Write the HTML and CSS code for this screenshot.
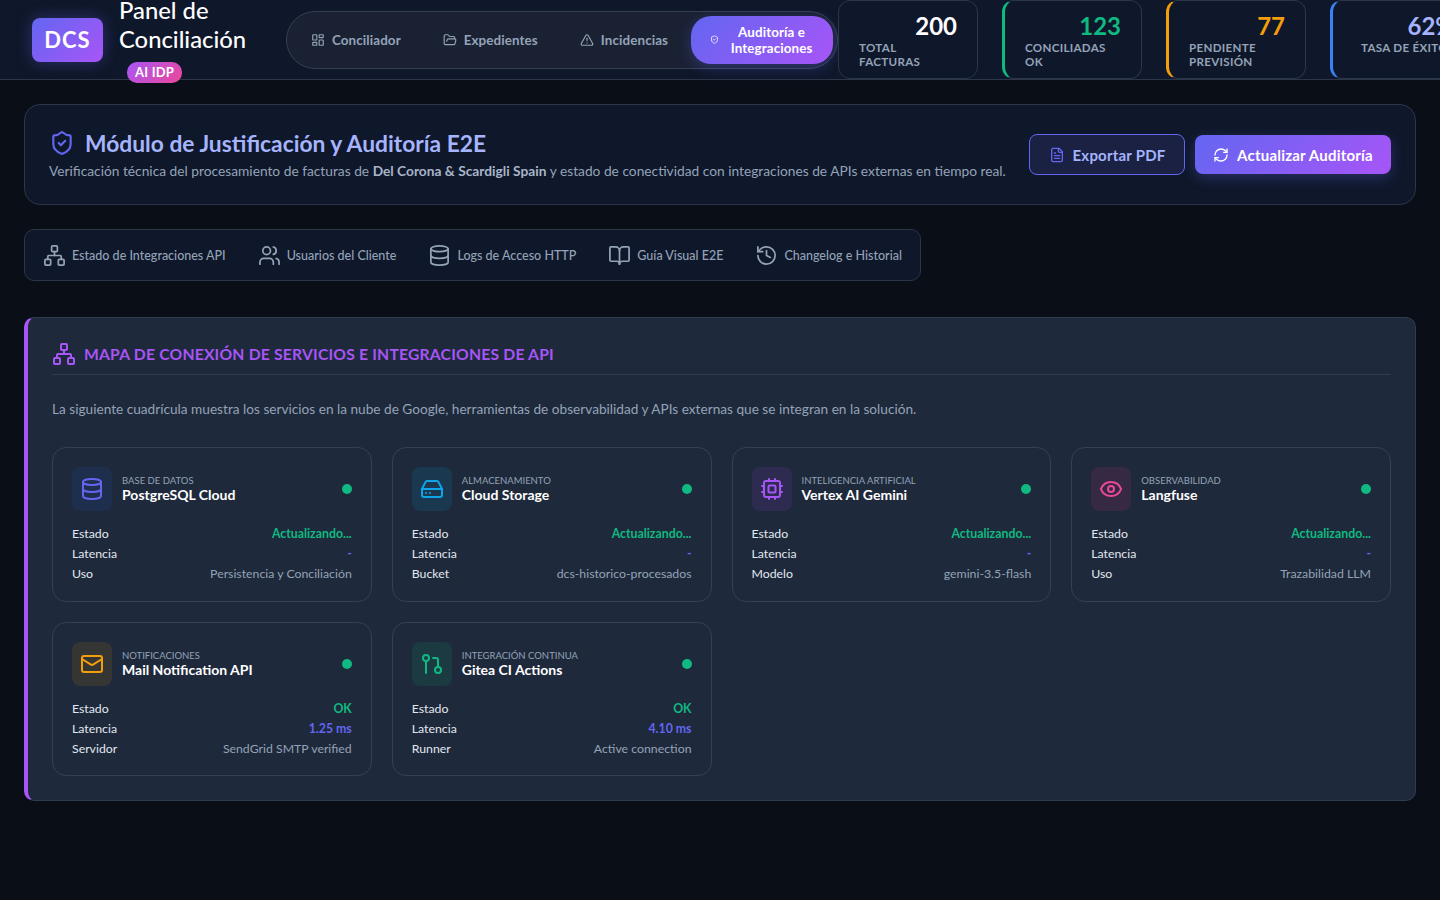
FILE: index.html
```html
<!DOCTYPE html>
<html lang="es">
<head>
  <meta charset="UTF-8">
  <meta name="viewport" content="width=device-width, initial-scale=1.0">
  <title>Panel de Conciliación - Auditoría</title>
  <link rel="stylesheet" href="styles.css">
</head>
<body>
  <header class="topbar">
    <div class="brand">
      <div class="logo">DCS</div>
      <div class="brand-text">
        <h1 class="brand-title">Panel de Conciliación</h1>
        <span class="brand-badge">AI IDP</span>
      </div>
    </div>

    <nav class="main-nav">
      <a class="nav-item" href="#">
        <svg class="icon nav-icon" viewBox="0 0 24 24"><rect x="3" y="3" width="7" height="9" rx="1"/><rect x="14" y="3" width="7" height="5" rx="1"/><rect x="14" y="12" width="7" height="9" rx="1"/><rect x="3" y="16" width="7" height="5" rx="1"/></svg>
        Conciliador
      </a>
      <a class="nav-item" href="#">
        <svg class="icon nav-icon" viewBox="0 0 24 24"><path d="m6 14 1.5-2.9A2 2 0 0 1 9.24 10H20a2 2 0 0 1 1.94 2.5l-1.54 6a2 2 0 0 1-1.95 1.5H4a2 2 0 0 1-2-2V5a2 2 0 0 1 2-2h3.9a2 2 0 0 1 1.69.9l.81 1.2a2 2 0 0 0 1.67.9H18a2 2 0 0 1 2 2v2"/></svg>
        Expedientes
      </a>
      <a class="nav-item" href="#">
        <svg class="icon nav-icon" viewBox="0 0 24 24"><path d="m21.73 18-8-14a2 2 0 0 0-3.48 0l-8 14A2 2 0 0 0 4 21h16a2 2 0 0 0 1.73-3"/><path d="M12 9v4"/><path d="M12 17h.01"/></svg>
        Incidencias
      </a>
      <a class="nav-item nav-active" href="#">
        <svg class="icon nav-icon-small" viewBox="0 0 24 24"><path d="M20 13c0 5-3.5 7.5-7.66 8.95a1 1 0 0 1-.67-.01C7.5 20.5 4 18 4 13V6a1 1 0 0 1 1-1c2 0 4.5-1.2 6.24-2.72a1.17 1.17 0 0 1 1.52 0C14.51 3.81 17 5 19 5a1 1 0 0 1 1 1z"/><path d="m9 12 2 2 4-4"/></svg>
        <span>Auditoría e Integraciones</span>
      </a>
    </nav>

    <div class="stats">
      <div class="stat-card">
        <div class="stat-value">200</div>
        <div class="stat-label">Total Facturas</div>
      </div>
      <div class="stat-card stat-green">
        <div class="stat-value">123</div>
        <div class="stat-label">Conciliadas OK</div>
      </div>
      <div class="stat-card stat-orange">
        <div class="stat-value">77</div>
        <div class="stat-label">Pendiente Previsión</div>
      </div>
      <div class="stat-card stat-blue">
        <div class="stat-value">62%</div>
        <div class="stat-label">Tasa de Éxito</div>
      </div>
    </div>
  </header>

  <main class="content">
    <section class="hero">
      <div class="hero-text">
        <h2 class="hero-title">
          <svg class="icon hero-icon" viewBox="0 0 24 24"><path d="M20 13c0 5-3.5 7.5-7.66 8.95a1 1 0 0 1-.67-.01C7.5 20.5 4 18 4 13V6a1 1 0 0 1 1-1c2 0 4.5-1.2 6.24-2.72a1.17 1.17 0 0 1 1.52 0C14.51 3.81 17 5 19 5a1 1 0 0 1 1 1z"/><path d="m9 12 2 2 4-4"/></svg>
          Módulo de Justificación y Auditoría E2E
        </h2>
        <p class="hero-desc">Verificación técnica del procesamiento de facturas de <strong>Del Corona &amp; Scardigli Spain</strong> y estado de conectividad con integraciones de APIs externas en tiempo real.</p>
      </div>
      <div class="hero-actions">
        <button class="btn btn-outline">
          <svg class="icon btn-icon" viewBox="0 0 24 24"><path d="M15 2H6a2 2 0 0 0-2 2v16a2 2 0 0 0 2 2h12a2 2 0 0 0 2-2V7Z"/><path d="M14 2v4a2 2 0 0 0 2 2h4"/><path d="M10 9H8"/><path d="M16 13H8"/><path d="M16 17H8"/></svg>
          Exportar PDF
        </button>
        <button class="btn btn-primary">
          <svg class="icon btn-icon" viewBox="0 0 24 24"><path d="M3 12a9 9 0 0 1 9-9 9.75 9.75 0 0 1 6.74 2.74L21 8"/><path d="M21 3v5h-5"/><path d="M21 12a9 9 0 0 1-9 9 9.75 9.75 0 0 1-6.74-2.74L3 16"/><path d="M8 16H3v5"/></svg>
          Actualizar Auditoría
        </button>
      </div>
    </section>

    <div class="tabs">
      <a class="tab" href="#">
        <svg class="icon tab-icon" viewBox="0 0 24 24"><rect x="16" y="16" width="6" height="6" rx="1"/><rect x="2" y="16" width="6" height="6" rx="1"/><rect x="9" y="2" width="6" height="6" rx="1"/><path d="M5 16v-3a1 1 0 0 1 1-1h12a1 1 0 0 1 1 1v3"/><path d="M12 12V8"/></svg>
        Estado de Integraciones API
      </a>
      <a class="tab" href="#">
        <svg class="icon tab-icon" viewBox="0 0 24 24"><path d="M16 21v-2a4 4 0 0 0-4-4H6a4 4 0 0 0-4 4v2"/><circle cx="9" cy="7" r="4"/><path d="M22 21v-2a4 4 0 0 0-3-3.87"/><path d="M16 3.13a4 4 0 0 1 0 7.75"/></svg>
        Usuarios del Cliente
      </a>
      <a class="tab" href="#">
        <svg class="icon tab-icon" viewBox="0 0 24 24"><ellipse cx="12" cy="5" rx="9" ry="3"/><path d="M3 5v14a9 3 0 0 0 18 0V5"/><path d="M3 12a9 3 0 0 0 18 0"/></svg>
        Logs de Acceso HTTP
      </a>
      <a class="tab" href="#">
        <svg class="icon tab-icon" viewBox="0 0 24 24"><path d="M12 7v14"/><path d="M3 18a1 1 0 0 1-1-1V4a1 1 0 0 1 1-1h5a4 4 0 0 1 4 4 4 4 0 0 1 4-4h5a1 1 0 0 1 1 1v13a1 1 0 0 1-1 1h-6a3 3 0 0 0-3 3 3 3 0 0 0-3-3z"/></svg>
        Guía Visual E2E
      </a>
      <a class="tab" href="#">
        <svg class="icon tab-icon" viewBox="0 0 24 24"><path d="M3 12a9 9 0 1 0 9-9 9.75 9.75 0 0 0-6.74 2.74L3 8"/><path d="M3 3v5h5"/><path d="M12 7v5l4 2"/></svg>
        Changelog e Historial
      </a>
    </div>

    <section class="panel">
      <h3 class="panel-title">
        <svg class="icon panel-icon" viewBox="0 0 24 24"><rect x="16" y="16" width="6" height="6" rx="1"/><rect x="2" y="16" width="6" height="6" rx="1"/><rect x="9" y="2" width="6" height="6" rx="1"/><path d="M5 16v-3a1 1 0 0 1 1-1h12a1 1 0 0 1 1 1v3"/><path d="M12 12V8"/></svg>
        Mapa de Conexión de Servicios e Integraciones de API
      </h3>
      <p class="panel-desc">La siguiente cuadrícula muestra los servicios en la nube de Google, herramientas de observabilidad y APIs externas que se integran en la solución.</p>

      <div class="service-grid">
        <article class="service-card">
          <div class="service-head">
            <div class="service-icon tint-indigo">
              <svg class="icon" viewBox="0 0 24 24"><ellipse cx="12" cy="5" rx="9" ry="3"/><path d="M3 5v14a9 3 0 0 0 18 0V5"/><path d="M3 12a9 3 0 0 0 18 0"/></svg>
            </div>
            <div class="service-name">
              <span class="service-type">Base de datos</span>
              <strong>PostgreSQL Cloud</strong>
            </div>
            <span class="status-dot"></span>
          </div>
          <div class="service-row"><span>Estado</span><span class="val-ok">Actualizando...</span></div>
          <div class="service-row"><span>Latencia</span><span class="val-lat">-</span></div>
          <div class="service-row"><span>Uso</span><span class="val-muted">Persistencia y Conciliación</span></div>
        </article>

        <article class="service-card">
          <div class="service-head">
            <div class="service-icon tint-sky">
              <svg class="icon" viewBox="0 0 24 24"><path d="M22 12H2"/><path d="M5.45 5.11 2 12v6a2 2 0 0 0 2 2h16a2 2 0 0 0 2-2v-6l-3.45-6.89A2 2 0 0 0 16.76 4H7.24a2 2 0 0 0-1.79 1.11z"/><path d="M6 16h.01"/><path d="M10 16h.01"/></svg>
            </div>
            <div class="service-name">
              <span class="service-type">Almacenamiento</span>
              <strong>Cloud Storage</strong>
            </div>
            <span class="status-dot"></span>
          </div>
          <div class="service-row"><span>Estado</span><span class="val-ok">Actualizando...</span></div>
          <div class="service-row"><span>Latencia</span><span class="val-lat">-</span></div>
          <div class="service-row"><span>Bucket</span><span class="val-muted">dcs-historico-procesados</span></div>
        </article>

        <article class="service-card">
          <div class="service-head">
            <div class="service-icon tint-purple">
              <svg class="icon" viewBox="0 0 24 24"><rect x="4" y="4" width="16" height="16" rx="2"/><rect x="8.5" y="8.5" width="7" height="7" rx="1"/><path d="M15 2v2"/><path d="M15 20v2"/><path d="M2 15h2"/><path d="M2 9h2"/><path d="M20 15h2"/><path d="M20 9h2"/><path d="M9 2v2"/><path d="M9 20v2"/></svg>
            </div>
            <div class="service-name">
              <span class="service-type">Inteligencia artificial</span>
              <strong>Vertex AI Gemini</strong>
            </div>
            <span class="status-dot"></span>
          </div>
          <div class="service-row"><span>Estado</span><span class="val-ok">Actualizando...</span></div>
          <div class="service-row"><span>Latencia</span><span class="val-lat">-</span></div>
          <div class="service-row"><span>Modelo</span><span class="val-muted">gemini-3.5-flash</span></div>
        </article>

        <article class="service-card">
          <div class="service-head">
            <div class="service-icon tint-pink">
              <svg class="icon" viewBox="0 0 24 24"><path d="M2.06 12.35a1 1 0 0 1 0-.7 10.75 10.75 0 0 1 19.88 0 1 1 0 0 1 0 .7 10.75 10.75 0 0 1-19.88 0"/><circle cx="12" cy="12" r="3"/></svg>
            </div>
            <div class="service-name">
              <span class="service-type">Observabilidad</span>
              <strong>Langfuse</strong>
            </div>
            <span class="status-dot"></span>
          </div>
          <div class="service-row"><span>Estado</span><span class="val-ok">Actualizando...</span></div>
          <div class="service-row"><span>Latencia</span><span class="val-lat">-</span></div>
          <div class="service-row"><span>Uso</span><span class="val-muted">Trazabilidad LLM</span></div>
        </article>

        <article class="service-card">
          <div class="service-head">
            <div class="service-icon tint-amber">
              <svg class="icon" viewBox="0 0 24 24"><rect x="2" y="4" width="20" height="16" rx="2"/><path d="m22 7-8.97 5.7a1.94 1.94 0 0 1-2.06 0L2 7"/></svg>
            </div>
            <div class="service-name">
              <span class="service-type">Notificaciones</span>
              <strong>Mail Notification API</strong>
            </div>
            <span class="status-dot"></span>
          </div>
          <div class="service-row"><span>Estado</span><span class="val-ok">OK</span></div>
          <div class="service-row"><span>Latencia</span><span class="val-lat">1.25 ms</span></div>
          <div class="service-row"><span>Servidor</span><span class="val-muted">SendGrid SMTP verified</span></div>
        </article>

        <article class="service-card">
          <div class="service-head">
            <div class="service-icon tint-green">
              <svg class="icon" viewBox="0 0 24 24"><circle cx="6" cy="6" r="3"/><path d="M6 9v12"/><path d="M13 6h3a2 2 0 0 1 2 2v7"/><circle cx="18" cy="18" r="3"/></svg>
            </div>
            <div class="service-name">
              <span class="service-type">Integración continua</span>
              <strong>Gitea CI Actions</strong>
            </div>
            <span class="status-dot"></span>
          </div>
          <div class="service-row"><span>Estado</span><span class="val-ok">OK</span></div>
          <div class="service-row"><span>Latencia</span><span class="val-lat">4.10 ms</span></div>
          <div class="service-row"><span>Runner</span><span class="val-muted">Active connection</span></div>
        </article>
      </div>
    </section>
  </main>
</body>
</html>
```

FILE: styles.css
```css
/* Reset & Base */
* {
  margin: 0;
  padding: 0;
  box-sizing: border-box;
}

html, body {
  height: 100%;
  overflow: hidden;
}

body {
  font-family: 'Lato', 'Noto Sans', sans-serif;
  color: #f1f5f9;
  background: #0a0e17;
}

a {
  text-decoration: none;
  color: inherit;
}

.icon {
  fill: none;
  stroke: currentColor;
  stroke-width: 2;
  stroke-linecap: round;
  stroke-linejoin: round;
  flex-shrink: 0;
}

/* Top bar */
.topbar {
  height: 80px;
  display: flex;
  align-items: center;
  gap: 24px;
  padding-left: 32px;
  background: #0f172a;
  border-bottom: 1px solid #2b3648;
  white-space: nowrap;
}

.brand {
  display: flex;
  align-items: center;
  gap: 16px;
  flex-shrink: 0;
  width: 230px;
}

.logo {
  width: 71px;
  height: 44px;
  border-radius: 8px;
  display: flex;
  align-items: center;
  justify-content: center;
  font-size: 22px;
  font-weight: 700;
  letter-spacing: 1px;
  color: #fff;
  background: linear-gradient(135deg, #6366f1, #a855f7);
  box-shadow: 0 0 16px rgba(99, 102, 241, 0.35);
}

.brand-text {
  position: relative;
  width: 143px;
  height: 80px;
}

.brand-title {
  width: 140px;
  margin-top: -4px;
  font-size: 23.8px;
  font-weight: 500;
  line-height: 29px;
  color: #fff;
  white-space: normal;
}

.brand-badge {
  position: absolute;
  left: 8px;
  top: 62px;
  height: 21px;
  padding: 0 8px;
  border-radius: 10px;
  font-size: 13px;
  font-weight: 700;
  line-height: 21px;
  letter-spacing: 0.2px;
  color: #fff;
  background: linear-gradient(135deg, #a855f7, #ec4899);
}

.main-nav {
  width: 552px;
  height: 58px;
  margin-right: -24px;
  flex-shrink: 0;
  display: flex;
  align-items: center;
  gap: 42px;
  padding: 4px 4px 4px 24px;
  background: #1a2133;
  border: 1px solid #334155;
  border-radius: 29px;
}

.nav-item {
  display: flex;
  align-items: center;
  gap: 7px;
  font-size: 13.4px;
  font-weight: 700;
  letter-spacing: 0.1px;
  color: #94a3b8;
}

.nav-icon {
  width: 14px;
  height: 14px;
}

.nav-icon-small {
  width: 9px;
  height: 9px;
}

.nav-active {
  width: 142px;
  height: 48px;
  margin-left: -19px;
  flex-shrink: 0;
  justify-content: center;
  gap: 10px;
  padding: 0 16px;
  border-radius: 20px;
  color: #fff;
  background: linear-gradient(135deg, #6366f1, #a855f7);
  box-shadow: 0 4px 14px rgba(99, 102, 241, 0.3);
}

.nav-active span {
  width: 86px;
  white-space: normal;
  text-align: center;
  line-height: 16px;
}

.stats {
  align-self: flex-start;
  display: flex;
  gap: 24px;
  flex-shrink: 0;
}

.stat-card {
  width: 140px;
  height: 79px;
  padding: 10px 20px 0;
  background: #0f172a;
  border: 1px solid #2b3648;
  border-radius: 12px;
  white-space: normal;
}

.stat-value {
  font-size: 24px;
  font-weight: 700;
  line-height: 30px;
  text-align: right;
  color: #fff;
}

.stat-label {
  max-width: 88px;
  font-size: 11.6px;
  font-weight: 700;
  line-height: 14px;
  letter-spacing: 0.3px;
  text-transform: uppercase;
  color: #94a3b8;
}

.stat-green {
  border-left: 3px solid #10b981;
}

.stat-green .stat-value {
  color: #10b981;
}

.stat-orange {
  border-left: 3px solid #f59e0b;
}

.stat-orange .stat-value {
  color: #f59e0b;
}

.stat-blue {
  border-left: 3px solid #3b82f6;
  padding-left: 28px;
  padding-right: 14px;
  white-space: nowrap;
}

.stat-blue .stat-value {
  color: #a5b4fc;
}

/* Content */
.content {
  padding: 24px;
  display: flex;
  flex-direction: column;
  align-items: flex-start;
}

.hero {
  width: 100%;
  height: 101px;
  display: flex;
  align-items: center;
  justify-content: space-between;
  padding: 0 24px;
  background: #0f172a;
  border: 1px solid #2b3648;
  border-radius: 16px;
}

.hero-title {
  display: flex;
  align-items: center;
  gap: 10px;
  font-size: 22.8px;
  font-weight: 700;
  line-height: 30px;
  color: #a5b4fc;
}

.hero-icon {
  width: 26px;
  height: 26px;
  color: #6366f1;
}

.hero-desc {
  margin-top: 3px;
  font-size: 13.75px;
  line-height: 20px;
  color: #94a3b8;
}

.hero-desc strong {
  color: #a8b5c9;
}

.hero-actions {
  display: flex;
  align-items: center;
  gap: 10px;
}

.btn {
  height: 41px;
  display: flex;
  align-items: center;
  justify-content: center;
  gap: 8px;
  border-radius: 8px;
  font-family: inherit;
  font-size: 15px;
  font-weight: 700;
  letter-spacing: 0.2px;
}

.btn-icon {
  width: 16px;
  height: 16px;
}

.btn-outline {
  width: 156px;
  color: #a5b4fc;
  background: #1a2142;
  border: 1px solid #6366f1;
}

.btn-outline .btn-icon {
  color: #6366f1;
}

.btn-primary {
  width: 196px;
  height: 39px;
  color: #fff;
  border: none;
  background: linear-gradient(135deg, #6366f1, #a855f7);
  box-shadow: 0 4px 14px rgba(99, 102, 241, 0.3);
}

.tabs {
  height: 52px;
  margin-top: 24px;
  display: flex;
  align-items: center;
  gap: 32px;
  padding: 0 18px;
  background: #0f172a;
  border: 1px solid #2b3648;
  border-radius: 10px;
}

.tab {
  display: flex;
  align-items: center;
  gap: 6px;
  font-size: 12.5px;
  font-weight: 500;
  color: #94a3b8;
}

.tab-icon {
  width: 23px;
  height: 23px;
  stroke-width: 1.8;
}

.panel {
  width: 100%;
  height: 484px;
  margin-top: 36px;
  padding: 24px 24px 0;
  background: #1e293b;
  border: 1px solid #2f3b4e;
  border-left: 4px solid #a855f7;
  border-radius: 10px;
}

.panel-title {
  height: 33px;
  display: flex;
  align-items: flex-start;
  gap: 8px;
  font-size: 15.7px;
  font-weight: 700;
  line-height: 24px;
  letter-spacing: 0.2px;
  text-transform: uppercase;
  color: #a855f7;
  border-bottom: 1px solid #2f3b4e;
}

.panel-icon {
  width: 24px;
  height: 24px;
}

.panel-desc {
  margin-top: 24px;
  font-size: 13.65px;
  line-height: 20px;
  color: #94a3b8;
}

.service-grid {
  margin-top: 28px;
  display: grid;
  grid-template-columns: repeat(4, 1fr);
  gap: 20px;
}

.service-card {
  height: 154.6px;
  padding: 19px;
  border: 1px solid #334155;
  border-radius: 14px;
}

.service-head {
  height: 44px;
  margin-bottom: 12.7px;
  display: flex;
  align-items: center;
  gap: 10px;
}

.service-icon {
  width: 40px;
  height: 44px;
  border-radius: 8px;
  display: flex;
  align-items: center;
  justify-content: center;
  flex-shrink: 0;
}

.service-icon svg {
  width: 24px;
  height: 24px;
}

.tint-indigo { color: #6366f1; background: #1e2e4d; }
.tint-sky { color: #0ea5e9; background: #1a3850; }
.tint-purple { color: #a855f7; background: #2e2b51; }
.tint-pink { color: #ec4899; background: #352944; }
.tint-amber { color: #f59e0b; background: #353533; }
.tint-green { color: #10b981; background: #1c3a41; }

.service-name {
  flex: 1;
  margin-top: -2px;
  display: flex;
  flex-direction: column;
}

.service-type {
  font-size: 9.5px;
  line-height: 13px;
  text-transform: uppercase;
  color: #94a3b8;
}

.service-name strong {
  font-size: 14px;
  font-weight: 700;
  line-height: 15px;
  color: #fff;
}

.status-dot {
  width: 10px;
  height: 10px;
  border-radius: 50%;
  background: #10b981;
}

.service-row {
  height: 20px;
  display: flex;
  align-items: center;
  justify-content: space-between;
  font-size: 12.3px;
  color: #e2e8f0;
}

.val-ok {
  color: #10b981;
  font-weight: 700;
}

.val-lat {
  color: #6366f1;
  font-weight: 700;
}

.val-muted {
  color: #94a3b8;
}
```
